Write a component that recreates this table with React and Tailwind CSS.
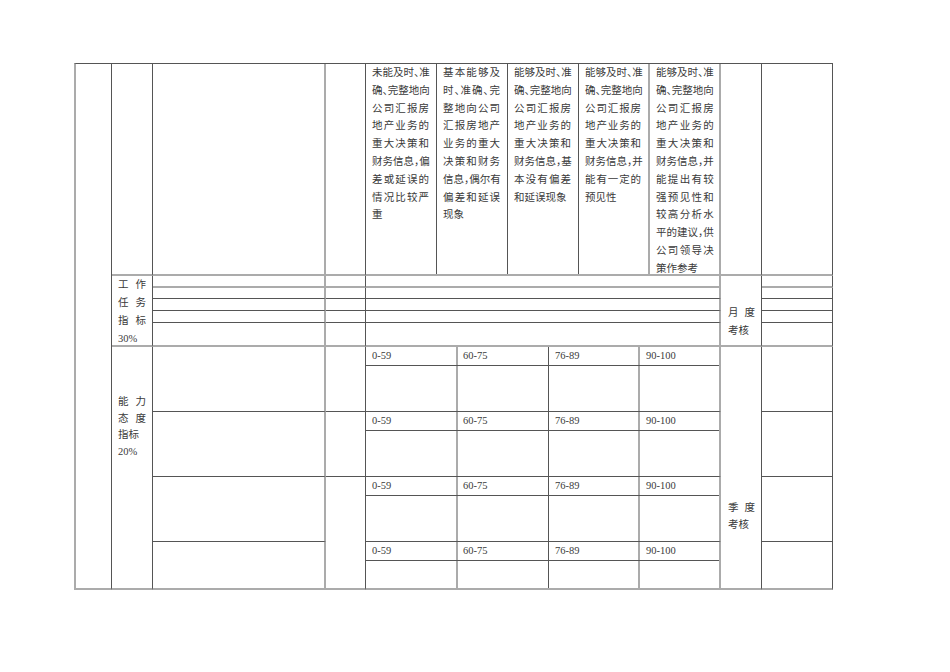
import React from 'react';

// border helpers: dark hairline and the lighter, wider rule the scan shows
const R = 'border-r border-r-[#555]';
const R2 = 'border-r-2 border-r-[#ababab]';
const B = 'border-b border-b-[#555]';
const B2 = 'border-b-2 border-b-[#ababab]';

const rowStart = [
    'row-start-1', 'row-start-2', 'row-start-3', 'row-start-4', 'row-start-5',
    'row-start-6', 'row-start-7', 'row-start-8', 'row-start-9', 'row-start-10',
];
const bottom = [B2, B2, B, B, B, B2, B, B, B, B2];

const criteria = [
    ['未能及时、准', '确、完整地向', '公司汇报房', '地产业务的', '重大决策和', '财务信息，偏', '差或延误的', '情况比较严', '重'],
    ['基本能够及', '时、准确、完', '整地向公司', '汇报房地产', '业务的重大', '决策和财务', '信息，偶尔有', '偏差和延误', '现象'],
    ['能够及时、准', '确、完整地向', '公司汇报房', '地产业务的', '重大决策和', '财务信息，基', '本没有偏差', '和延误现象'],
    ['能够及时、准', '确、完整地向', '公司汇报房', '地产业务的', '重大决策和', '财务信息，并', '能有一定的', '预见性'],
    ['能够及时、准', '确、完整地向', '公司汇报房', '地产业务的', '重大决策和', '财务信息，并', '能提出有较', '强预见性和', '较高分析水', '平的建议，供', '公司领导决', '策作参考'],
];

const scores = ['0-59', '60-75', '76-89', '90-100'];

// a justified line: characters spread edge to edge, punctuation set half width
const Line = ({ text, justify }) => {
    const chars = text.split('').map((ch, i) =>
        ch === '、' || ch === '，'
            ? <span key={i} className="[font-feature-settings:'halt']">{ch}</span>
            : <span key={i}>{ch}</span>
    );
    if (!justify) return <div className="whitespace-nowrap">{chars}</div>;
    return <div className="flex justify-between whitespace-nowrap">{chars}</div>;
};

const ScoreRow = () => (
    <div className="flex h-full flex-col">
        <div className="flex h-[19px] border-b border-b-[#555] leading-[18px]">
            <div className={`w-[92px] pl-[6px] ${R2}`}>{scores[0]}</div>
            <div className={`w-[91px] pl-[5px] ${R}`}>{scores[1]}</div>
            <div className={`w-[91px] pl-[6px] ${R2}`}>{scores[2]}</div>
            <div className="flex-1 pl-[6px]">{scores[3]}</div>
        </div>
        <div className="flex flex-1">
            <div className={`w-[92px] ${R2}`} />
            <div className={`w-[91px] ${R}`} />
            <div className={`w-[91px] ${R2}`} />
            <div className="flex-1" />
        </div>
    </div>
);

export default function App() {
    return (
        <div className="min-h-[672px] w-full bg-white pl-[74px] pt-[63px] font-['Liberation_Serif','Noto_Sans_CJK_SC',serif] text-[10.5px] text-[#3a3a3a]">
            <div className="grid w-max grid-cols-[36px_41px_173px_40px_355px_41px_71px] grid-rows-[212px_12px_11px_12px_12px_24px_65px_65px_65px_48px] border-l-2 border-t border-l-[#ababab] border-t-[#555]">
                {/* first column, empty the whole way down */}
                <div className={`col-start-1 row-start-1 row-span-10 ${R} ${B2}`} />

                {/* category column */}
                <div className={`col-start-2 row-start-1 ${R} ${B2}`} />
                <div className={`col-start-2 row-start-2 row-span-5 px-[6px] leading-[18px] ${R} ${B2}`}>
                    <Line text="工作" justify />
                    <Line text="任务" justify />
                    <Line text="指标" justify />
                    <div>30%</div>
                </div>
                <div className={`col-start-2 row-start-7 row-span-4 px-[6px] pt-[47px] leading-[16.7px] ${R} ${B2}`}>
                    <Line text="能力" justify />
                    <Line text="态度" justify />
                    <div>指标</div>
                    <div>20%</div>
                </div>

                {/* item name column */}
                {rowStart.map((rs, i) => (
                    <div key={`c3-${i}`} className={`col-start-3 ${rs} ${R2} ${bottom[i]}`} />
                ))}

                {/* weight column */}
                {rowStart.slice(0, 8).map((rs, i) => (
                    <div key={`c4-${i}`} className={`col-start-4 ${rs} ${R} ${bottom[i]}`} />
                ))}
                <div className={`col-start-4 row-start-9 row-span-2 ${R} ${B2}`} />

                {/* standards column */}
                <div className={`col-start-5 row-start-1 flex leading-[17.8px] ${R2} ${B2}`}>
                    {criteria.map((lines, ci) => (
                        <div
                            key={ci}
                            className={ci < 4
                                ? `w-[71px] pl-[6px] pr-[7px] ${ci === 3 ? 'border-r-2 border-r-[#ababab]' : R}`
                                : 'flex-1 pl-[6px] pr-[6px]'}
                        >
                            {lines.map((t, li) => (
                                <Line key={li} text={t} justify={li < lines.length - 1} />
                            ))}
                        </div>
                    ))}
                </div>
                {rowStart.slice(1, 6).map((rs, i) => (
                    <div key={`c5-${i}`} className={`col-start-5 ${rs} ${R2} ${bottom[i + 1]}`} />
                ))}
                {rowStart.slice(6).map((rs, i) => (
                    <div key={`c5s-${i}`} className={`col-start-5 ${rs} ${R2} ${bottom[i + 6]}`}>
                        <ScoreRow />
                    </div>
                ))}

                {/* assessment period column */}
                <div className={`col-start-6 row-start-1 ${R} ${B2}`} />
                <div className={`col-start-6 row-start-2 row-span-5 pl-[7px] pr-[6px] pt-[28px] leading-[18px] ${R} ${B2}`}>
                    <Line text="月度" justify />
                    <div>考核</div>
                </div>
                <div className={`col-start-6 row-start-7 row-span-4 pl-[7px] pr-[6px] pt-[152px] leading-[17px] ${R} ${B2}`}>
                    <Line text="季度" justify />
                    <div>考核</div>
                </div>

                {/* last column */}
                {rowStart.map((rs, i) => (
                    <div key={`c7-${i}`} className={`col-start-7 ${rs} ${R} ${bottom[i]}`} />
                ))}
            </div>
        </div>
    );
}
